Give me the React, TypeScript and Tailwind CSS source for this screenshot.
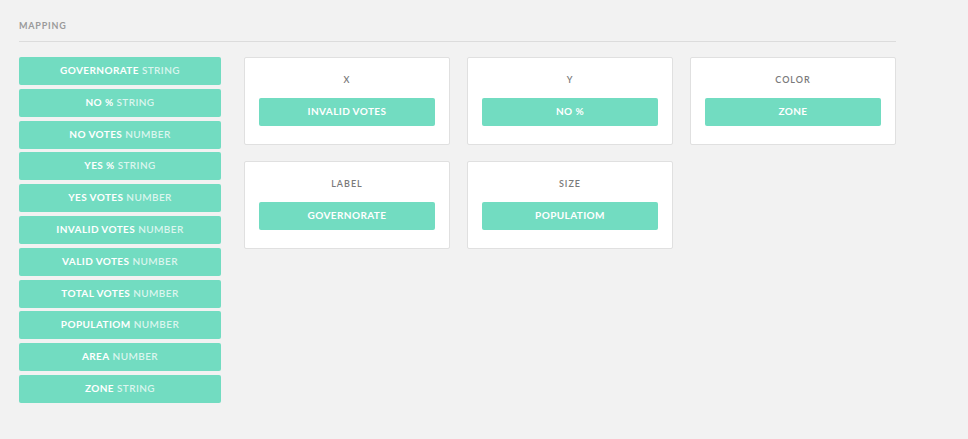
import React from "react";

const dimensions = [
    { name: "Governorate", type: "string" },
    { name: "No %", type: "string" },
    { name: "No votes", type: "number" },
    { name: "Yes %", type: "string" },
    { name: "Yes votes", type: "number" },
    { name: "Invalid votes", type: "number" },
    { name: "Valid votes", type: "number" },
    { name: "Total votes", type: "number" },
    { name: "Populatiom", type: "number" },
    { name: "Area", type: "number" },
    { name: "Zone", type: "string" },
];

const mappings = [
    { label: "X", value: "Invalid votes" },
    { label: "Y", value: "No %" },
    { label: "Color", value: "Zone" },
    { label: "Label", value: "Governorate" },
    { label: "Size", value: "Populatiom" },
];

function Pill({ children }: { children: React.ReactNode }) {
    return (
        <div className="h-[28px] pb-px rounded-[2px] bg-[#72dcc1] flex items-center justify-center text-[10px] font-bold uppercase tracking-[0.4px] text-white">
            {children}
        </div>
    );
}

export default function App() {
    return (
        <div
            className="min-h-[439px] bg-[#f2f2f2] px-[19px] pt-[11px]"
            style={{ fontFamily: "Lato, 'Open Sans', sans-serif" }}
        >
            <div className="w-[877px] border-b border-[#dcdcdc] pb-[6px]">
                <span className="text-[9px] font-bold uppercase tracking-[0.8px] text-[#9a9a9a]">Mapping</span>
            </div>

            <div className="flex gap-[23px] mt-[15px]">
                {/* dimensions list */}
                <div className="w-[202px] flex flex-col gap-[3.8px]">
                    {dimensions.map((d) => (
                        <Pill key={d.name}>
                            <span>{d.name}</span>
                            <span className="ml-[3px] font-semibold text-white/75">{d.type}</span>
                        </Pill>
                    ))}
                </div>

                {/* mapping cards */}
                <div className="grid grid-cols-[206px_206px_206px] gap-x-[17px] gap-y-[16px] content-start">
                    {mappings.map((m) => (
                        <div key={m.label} className="h-[88px] bg-white border border-[#e0e0e0] rounded-[2px] px-[14px] pt-[16px]">
                            <div className="text-center text-[9px] font-semibold uppercase tracking-[1px] text-[#7a7a7a] leading-[12px]">
                                {m.label}
                            </div>
                            <div className="mt-[12px]">
                                <Pill>{m.value}</Pill>
                            </div>
                        </div>
                    ))}
                </div>
            </div>
        </div>
    );
}
